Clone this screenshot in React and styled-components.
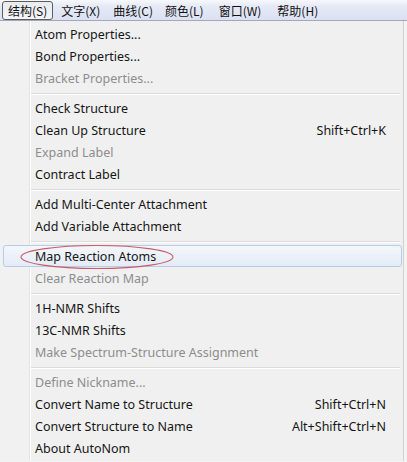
import React from 'react';
import styled, { createGlobalStyle } from 'styled-components';

const GlobalStyle = createGlobalStyle`
    html, body {
        margin: 0;
        padding: 0;
        background: #f3f3f3;
    }
    body {
        font-family: "Noto Sans", "Noto Sans CJK SC", sans-serif;
    }
`

const Window = styled.div`
    width: 407px;
    height: 462px;
    overflow: hidden;
    background: #f3f3f3;
`

const MenuBar = styled.nav`
    display: flex;
    align-items: center;
    height: 20px;
    padding-left: 2px;
    background: linear-gradient(#f7f8fc 0%, #e6eaf7 30%, #dbe1f3 100%);
    border-bottom: 1px solid #a3a7ba;
`

const BarItem = styled.div`
    box-sizing: border-box;
    height: 19px;
    margin-right: ${p => p.$gap}px;
    padding: 0 5px;
    display: flex;
    align-items: center;
    font-family: "Noto Sans CJK SC", sans-serif;
    font-size: 12px;
    color: #111;
    border: 1px solid ${p => (p.$pressed ? '#5d5d5d' : 'transparent')};
    border-radius: 3px;
    background: ${p => (p.$pressed ? 'linear-gradient(#e9ebef, #f4f5f8)' : 'transparent')};
`

const Dropdown = styled.ul`
    list-style: none;
    margin: 0;
    padding: 2px 0;
    width: 404px;
    box-sizing: border-box;
    border-right: 1px solid #d2d2d2;
    background: linear-gradient(
        to right,
        #f1f1f1 0 29px,
        #e2e3e3 29px 30px,
        #ffffff 30px 31px,
        #f0f0f0 31px
    );
`

const Item = styled.li`
    position: relative;
    box-sizing: border-box;
    height: 22px;
    display: flex;
    align-items: center;
    justify-content: space-between;
    padding: 0 17px 0 35px;
    font-size: 12.5px;
    color: ${p => (p.$disabled ? '#8d8d8d' : '#161616')};

    ${p => p.$active && `
        margin: 0 1px 0 3px;
        padding: 0 15px 0 31px;
        border: 1px solid #b4cde9;
        border-radius: 3px;
        background: linear-gradient(#f3f6fb, #e5ecf7);
    `}
`

const Shortcut = styled.span`
    font-size: 12.5px;
    color: #161616;
`

const Separator = styled.li`
    height: 8px;
    display: flex;
    align-items: center;
    margin-left: 31px;
    margin-right: 3px;

    &::before {
        content: '';
        flex: 1;
        height: 1px;
        background: #dcdcdc;
        box-shadow: 0 1px 0 #ffffff;
    }
`

const Annotation = styled.svg`
    position: absolute;
    left: 15px;
    top: -2px;
    width: 156px;
    height: 26px;
    pointer-events: none;
    overflow: visible;
`

const barItems = [
    { label: '结构(S)', gap: 2, pressed: true },
    { label: '文字(X)', gap: 1 },
    { label: '曲线(C)', gap: 0 },
    { label: '颜色(L)', gap: 3 },
    { label: '窗口(W)', gap: 4 },
    { label: '帮助(H)', gap: 0 },
];

const groups = [
    [
        { label: 'Atom Properties...' },
        { label: 'Bond Properties...' },
        { label: 'Bracket Properties...', disabled: true },
    ],
    [
        { label: 'Check Structure' },
        { label: 'Clean Up Structure', shortcut: 'Shift+Ctrl+K' },
        { label: 'Expand Label', disabled: true },
        { label: 'Contract Label' },
    ],
    [
        { label: 'Add Multi-Center Attachment' },
        { label: 'Add Variable Attachment' },
    ],
    [
        { label: 'Map Reaction Atoms', active: true },
        { label: 'Clear Reaction Map', disabled: true },
    ],
    [
        { label: '1H-NMR Shifts' },
        { label: '13C-NMR Shifts' },
        { label: 'Make Spectrum-Structure Assignment', disabled: true },
    ],
    [
        { label: 'Define Nickname...', disabled: true },
        { label: 'Convert Name to Structure', shortcut: 'Shift+Ctrl+N' },
        { label: 'Convert Structure to Name', shortcut: 'Alt+Shift+Ctrl+N' },
        { label: 'About AutoNom' },
    ],
];

const App = () => {
    return (
        <Window>
            <GlobalStyle />
            <MenuBar>
                {barItems.map(b => (
                    <BarItem key={b.label} $pressed={b.pressed} $gap={b.gap}>{b.label}</BarItem>
                ))}
            </MenuBar>
            <Dropdown>
                {groups.map((group, gi) => (
                    <React.Fragment key={gi}>
                        {gi > 0 && <Separator />}
                        {group.map(it => (
                            <Item key={it.label} $disabled={it.disabled} $active={it.active}>
                                <span>{it.label}</span>
                                {it.shortcut && <Shortcut>{it.shortcut}</Shortcut>}
                                {it.active && (
                                    <Annotation viewBox="0 0 156 26">
                                        <ellipse cx="78" cy="13" rx="76" ry="11.5" fill="none" stroke="#c95a66" strokeWidth="1.1" />
                                    </Annotation>
                                )}
                            </Item>
                        ))}
                    </React.Fragment>
                ))}
            </Dropdown>
        </Window>
    )
}

export default App;
